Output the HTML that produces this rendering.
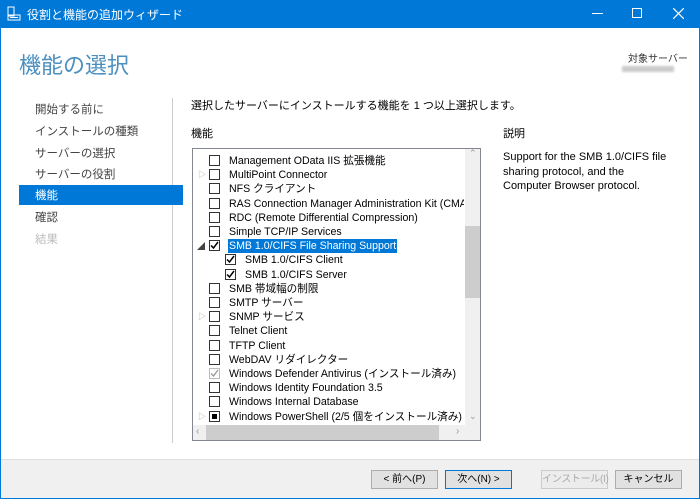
<!DOCTYPE html>
<html><head><meta charset="utf-8"><style>
*{margin:0;padding:0;box-sizing:border-box}
body{width:700px;height:499px;overflow:hidden;background:#fff;font-family:"Liberation Sans","Noto Sans CJK JP",sans-serif;font-size:11px;color:#000;position:relative}
.a{position:absolute;white-space:nowrap}
#tb{left:0;top:0;width:700px;height:28px;background:#0078d7;color:#fff}
#frame{left:0;top:28px;width:700px;height:471px;border:1px solid #0078d7;border-top:none}
.nav{left:35px;color:#444;font-size:11.5px}
.row{left:209px;height:14px;line-height:14px;font-size:10.6px}
.cb{position:absolute;width:11px;height:11px;border:1px solid #333;background:#fff;top:1px}
.lbl{position:absolute;left:19px;top:0;padding:0 1px}
.btn{top:470px;height:19px;width:67px;border:1px solid #adadad;background:#e1e1e1;text-align:center;line-height:17px;font-size:10px}
</style></head><body>
<div class="a" id="tb">
<svg class="a" style="left:7px;top:6px" width="14" height="15" viewBox="0 0 14 15"><rect x="1" y="1" width="6" height="9" fill="none" stroke="#fff"/><rect x="1" y="9" width="12" height="5" fill="none" stroke="#fff"/><line x1="3" y1="11.5" x2="11" y2="11.5" stroke="#fff"/></svg>
<div class="a" style="left:27px;top:6px;font-size:12px">役割と機能の追加ウィザード</div>
<div class="a" style="left:592px;top:13px;width:11px;height:1px;background:#fff"></div>
<div class="a" style="left:632px;top:8px;width:10px;height:10px;border:1px solid #fff"></div>
<svg class="a" style="left:673px;top:8px" width="11" height="11"><path d="M0 0L11 11M11 0L0 11" stroke="#fff" stroke-width="1.2"/></svg>
</div>
<div class="a" id="frame"></div>
<div class="a" style="left:19px;top:48px;font-size:22px;color:#4a8fbf">機能の選択</div>
<div class="a" style="left:628px;top:50px;font-size:10px;color:#333">対象サーバー</div>
<div class="a" style="left:622px;top:66px;width:52px;height:6px;background:#ccc;filter:blur(1px)"></div>
<div class="a" style="left:172px;top:98px;width:1px;height:345px;background:#ccc"></div>
<div class="a nav" style="top:101px">開始する前に</div>
<div class="a nav" style="top:123px">インストールの種類</div>
<div class="a nav" style="top:145px">サーバーの選択</div>
<div class="a nav" style="top:166px">サーバーの役割</div>
<div class="a" style="left:19px;top:185px;width:164px;height:20px;background:#0078d7"></div>
<div class="a nav" style="top:187px;color:#fff">機能</div>
<div class="a nav" style="top:209px">確認</div>
<div class="a nav" style="top:231px;color:#bbb">結果</div>
<div class="a" style="left:191px;top:97px">選択したサーバーにインストールする機能を 1 つ以上選択します。</div>
<div class="a" style="left:191px;top:125px">機能</div>
<div class="a" style="left:503px;top:125px">説明</div>
<div class="a" style="left:503px;top:150px;line-height:14.5px;white-space:normal;width:170px">Support for the SMB 1.0/CIFS file sharing protocol, and the Computer Browser protocol.</div>
<div class="a" style="left:192px;top:148px;width:289px;height:293px;border:1px solid #828790;overflow:hidden;background:#fff">
<div class="a" style="left:272px;top:0;width:15px;height:276px;background:#f0f0f0"></div>
<div class="a" style="left:272px;top:77px;width:15px;height:72px;background:#cdcdcd"></div>
<div class="a" style="left:276px;top:-1px;color:#999;font-size:9px">&#8963;</div>
<div class="a" style="left:276px;top:262px;color:#999;font-size:9px">&#8964;</div>
<div class="a" style="left:0;top:276px;width:272px;height:15px;background:#f0f0f0"></div>
<div class="a" style="left:13px;top:276px;width:233px;height:15px;background:#cdcdcd"></div>
<div class="a" style="left:3px;top:277px;color:#999;font-size:10px">&lsaquo;</div>
<div class="a" style="left:263px;top:277px;color:#999;font-size:10px">&rsaquo;</div>
<div class="a" style="left:272px;top:276px;width:15px;height:15px;background:#f0f0f0"></div>
</div>
<div id="rows"></div>
<div class="a" style="left:1px;top:459px;width:698px;height:39px;background:#f0f0f0;border-top:1px solid #dfdfdf"></div>
<div class="a btn" style="left:371px">&lt; 前へ(P)</div>
<div class="a btn" style="left:445px;border-color:#0078d7">次へ(N) &gt;</div>
<div class="a btn" style="left:541px;color:#aaa;background:#ececec;border-color:#ccc;letter-spacing:-0.3px">インストール(I)</div>
<div class="a btn" style="left:615px">キャンセル</div>
<script>
var R=[["Management OData IIS 拡張機能",0,""],["MultiPoint Connector",0,"r"],["NFS クライアント",0,""],["RAS Connection Manager Administration Kit (CMAK)",0,""],["RDC (Remote Differential Compression)",0,""],["Simple TCP/IP Services",0,""],["SMB 1.0/CIFS File Sharing Support",1,"d",0,1],["SMB 1.0/CIFS Client",1,"",1],["SMB 1.0/CIFS Server",1,"",1],["SMB 帯域幅の制限",0,""],["SMTP サーバー",0,""],["SNMP サービス",0,"r"],["Telnet Client",0,""],["TFTP Client",0,""],["WebDAV リダイレクター",0,""],["Windows Defender Antivirus (インストール済み)",2,""],["Windows Identity Foundation 3.5",0,""],["Windows Internal Database",0,""],["Windows PowerShell (2/5 個をインストール済み)",3,"r"]];
var h="";R.forEach(function(r,i){var y=154+i*14.2;var x=209+(r[3]?16:0);
h+='<div class="a row" style="left:'+x+'px;top:'+y+'px;width:'+(464-x)+'px;overflow:hidden">';
var cbs=r[1]==2?'border-color:#bbb':'';
h+='<div class="cb" style="'+cbs+'">'+(r[1]==1?'<svg width="9" height="9" style="position:absolute;left:0;top:0"><path d="M1 4.5L3.5 7L8 1" stroke="#000" stroke-width="1.5" fill="none"/></svg>':r[1]==2?'<svg width="9" height="9" style="position:absolute;left:0;top:0"><path d="M1 4.5L3.5 7L8 1" stroke="#999" stroke-width="1.3" fill="none"/></svg>':r[1]==3?'<div style="position:absolute;left:2px;top:2px;width:5px;height:5px;background:#000"></div>':'')+'</div>';
h+='<div class="lbl" style="'+(r[4]?'background:#0078d7;color:#fff;':'')+'">'+r[0]+'</div></div>';
if(r[2]=="r")h+='<div class="a" style="left:198px;top:'+(y+1)+'px;color:#aaa;font-size:8px">&#9655;</div>';
if(r[2]=="d")h+='<div class="a" style="left:197px;top:'+(y+2)+'px;color:#444;font-size:8px">&#9698;</div>';
});document.getElementById("rows").innerHTML=h;
</script>
</body></html>
